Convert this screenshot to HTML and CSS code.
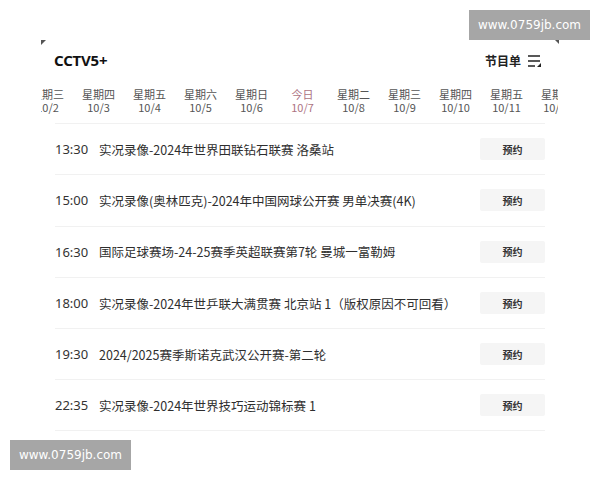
FILE: index.html
```html
<!DOCTYPE html>
<html lang="zh">
<head>
<meta charset="utf-8">
<link rel="stylesheet" href="styles.css">
</head>
<body>
<div class="app">
  <span class="corner-mark"></span>
  <header class="header">
    <div class="channel">CCTV5+</div>
    <div class="guide">节目单
      <svg class="guide-icon" width="15" height="14" viewBox="0 0 15 14">
        <path d="M1 2H13M1 7H13M1 12H8" stroke="#222" stroke-width="1.5" fill="none"/>
        <path d="M10 13L14 13L14 9Z" fill="#222"/>
      </svg>
    </div>
  </header>
  <div class="dates">
    <div class="dates-track">
      <div class="day"><span>星期三</span><span>10/2</span></div>
      <div class="day"><span>星期四</span><span>10/3</span></div>
      <div class="day"><span>星期五</span><span>10/4</span></div>
      <div class="day"><span>星期六</span><span>10/5</span></div>
      <div class="day"><span>星期日</span><span>10/6</span></div>
      <div class="day today"><span>今日</span><span>10/7</span></div>
      <div class="day"><span>星期二</span><span>10/8</span></div>
      <div class="day"><span>星期三</span><span>10/9</span></div>
      <div class="day"><span>星期四</span><span>10/10</span></div>
      <div class="day"><span>星期五</span><span>10/11</span></div>
      <div class="day"><span>星期六</span><span>10/12</span></div>
    </div>
  </div>
  <ul class="list">
    <li class="row"><span class="time">13:30</span><span class="title">实况录像-2024年世界田联钻石联赛 洛桑站</span><span class="btn">预约</span></li>
    <li class="row"><span class="time">15:00</span><span class="title">实况录像(奥林匹克)-2024年中国网球公开赛 男单决赛(4K)</span><span class="btn">预约</span></li>
    <li class="row"><span class="time">16:30</span><span class="title">国际足球赛场-24-25赛季英超联赛第7轮 曼城一富勒姆</span><span class="btn">预约</span></li>
    <li class="row"><span class="time">18:00</span><span class="title">实况录像-2024年世乒联大满贯赛 北京站 1（版权原因不可回看）</span><span class="btn">预约</span></li>
    <li class="row"><span class="time">19:30</span><span class="title">2024/2025赛季斯诺克武汉公开赛-第二轮</span><span class="btn">预约</span></li>
    <li class="row"><span class="time">22:35</span><span class="title">实况录像-2024年世界技巧运动锦标赛 1</span><span class="btn">预约</span></li>
  </ul>
</div>
<div class="wm wm-top">www.0759jb.com<span class="wm-tail"></span></div>
<div class="wm wm-bottom">www.0759jb.com</div>
</body>
</html>
```
FILE: styles.css
```css
* { box-sizing: border-box; }
html, body { margin: 0; padding: 0; background: #fff; }
body {
  width: 600px; height: 480px; overflow: hidden;
  font-family: "Noto Sans CJK SC", "Noto Sans", sans-serif;
  color: #333;
}
.app {
  position: relative;
  margin: 40px 0 0 41px;
  width: 517px;
}
.corner-mark {
  position: absolute; left: 0; top: 0;
  width: 0; height: 0;
  border-top: 5px solid #555;
  border-right: 5px solid transparent;
}
.header {
  height: 40px;
  display: flex; align-items: center; justify-content: space-between;
  padding: 0 16px 0 13px;
}
.channel {
  font-family: "Noto Sans", sans-serif;
  font-weight: 700; font-size: 15px; color: #111;
  letter-spacing: -0.2px;
}
.guide {
  display: flex; align-items: center; gap: 6px;
  font-size: 12px; font-weight: 700; color: #222;
}
.guide-icon { display: block; margin-top: 1px; }
.dates {
  overflow: hidden;
  padding-top: 8px;
  height: 43px;
}
.dates-track {
  display: flex;
  margin-left: -19px;
}
.day {
  flex: 0 0 51px;
  display: flex; flex-direction: column; align-items: center;
  font-size: 11px; line-height: 13px; color: #555;
}
.day.today { color: #ad7382; }
.list {
  list-style: none; margin: 0 0 0 14px; padding: 0;
  width: 490px;
}
.row {
  height: 51.3px;
  border-top: 1px solid #f1f1f1;
  display: flex; align-items: center;
}
.row:last-child { border-bottom: 1px solid #f1f1f1; }
.time {
  flex: 0 0 44px;
  font-family: "Noto Sans", sans-serif;
  font-size: 13px; color: #333;
}
.title {
  flex: 1;
  font-size: 12.5px; color: #2e2e2e;
  white-space: nowrap;
}
.btn {
  flex: 0 0 65px; height: 22px;
  background: #f5f5f5; border-radius: 2px;
  display: flex; align-items: center; justify-content: center;
  font-size: 10px; font-weight: 700; color: #333;
}
.wm {
  position: absolute;
  width: 121px; height: 30px;
  background: #a6a6a6; color: #fff;
  font-family: "DejaVu Sans", sans-serif;
  font-size: 12px;
  display: flex; align-items: center; justify-content: center;
}
.wm-top { left: 469px; top: 10px; }
.wm-bottom { left: 10px; top: 440px; }
.wm-tail {
  position: absolute; right: 31px; top: 30px;
  width: 0; height: 0;
  border-top: 4px solid #555;
  border-left: 4px solid transparent;
}
```
